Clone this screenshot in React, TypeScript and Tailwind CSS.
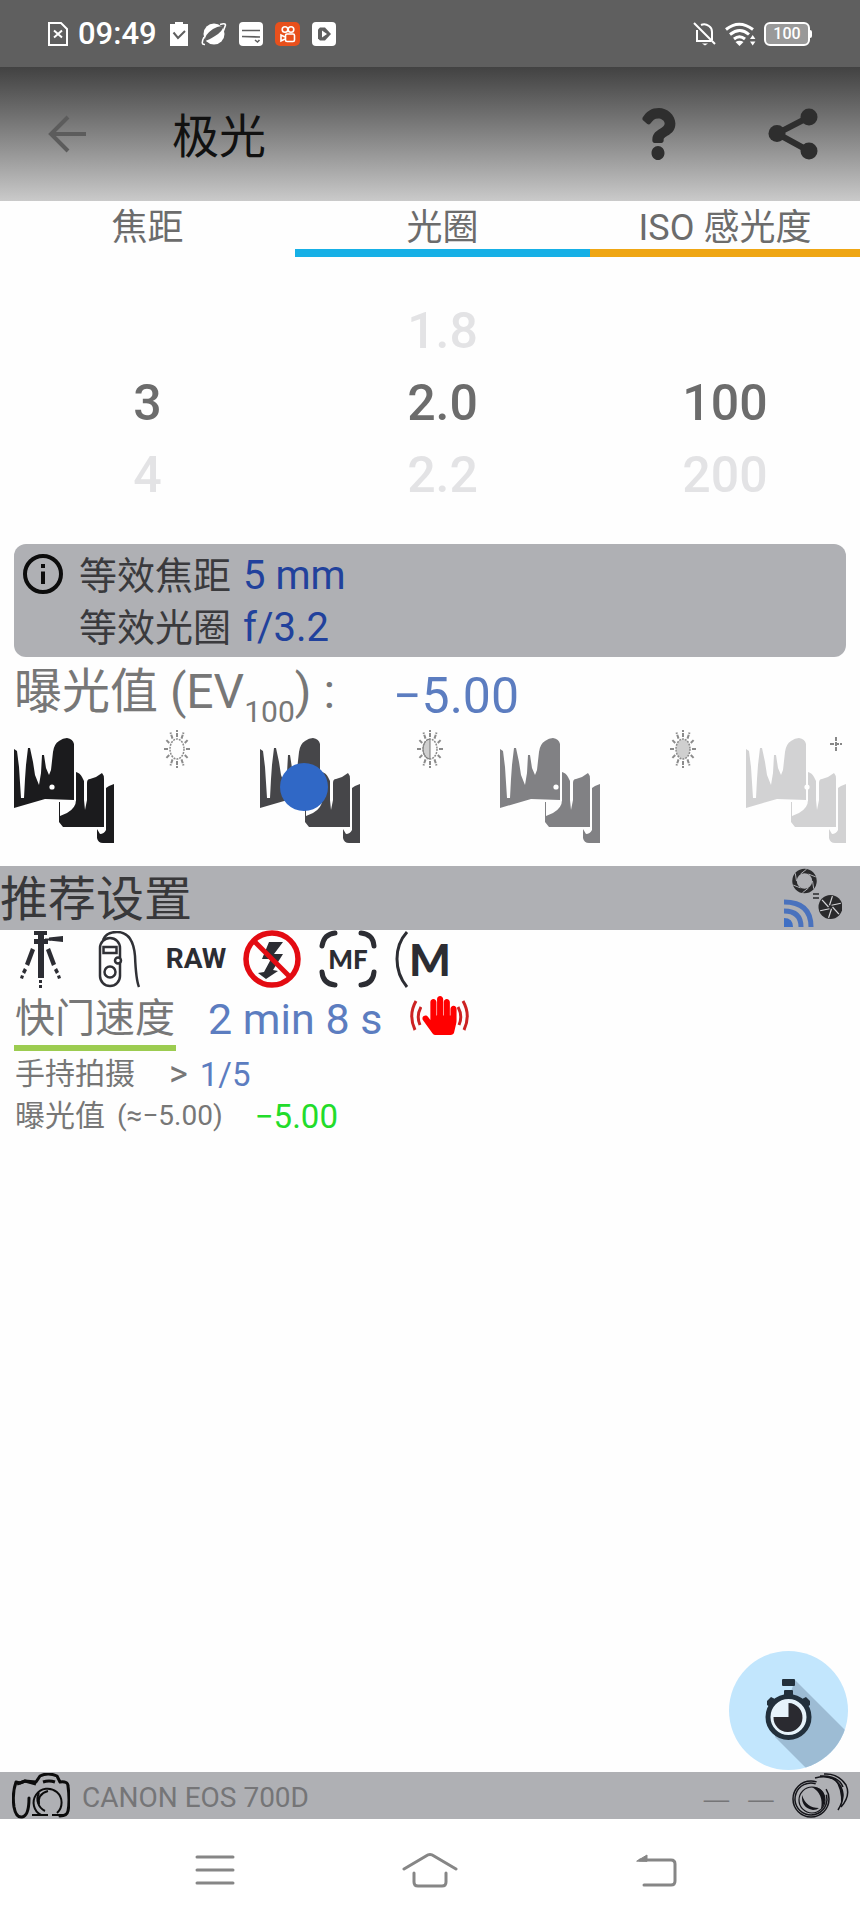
import type { ReactNode } from "react";
import { FaHandPaper, FaQuestion } from "react-icons/fa";

const pickers = [
  { label: "焦距", bar: "bg-transparent", rows: ["", "3", "4"] },
  { label: "光圈", bar: "bg-[#16b0e6]", rows: ["1.8", "2.0", "2.2"] },
  { label: "ISO 感光度", bar: "bg-[#efa614]", rows: ["", "100", "200"] },
];

const spokes = Array.from({ length: 12 }, (_, i) => (i * Math.PI) / 6);

function Ridge({ color, dot }: { color: string; dot: number }) {
  return (
    <svg width="100" height="106" viewBox="0 0 100 106" className={`shrink-0 ${color}`} fill="currentColor" aria-hidden="true">
      <path d="M0 12 3 14 5 30 7 61H10L11 42 12 28 14 11H16L19 25 21 38 25 48 27 36 28 18H30L32 31 35 38 37 33 39 15Q40 7 45 4 49 1 53 1 59 2 60 7V63L31 62 0 71Z" />
      <path d="M45 65h1v14l7-3q9-5 9-13V35q4 1 6 5l2 4v19l1 10 2-10V46q0-4 3-4l6-2 6-4q2 2 2 6v48H49l-4-5Z" />
      <path d="M100 47l-5 2-3 2v42q-2 4-6 4l-3-5V101q1 5 6 5H100Z" />
      <path d="M61.500 34V64" stroke="#fff" strokeWidth="1" />
      <circle cx={dot} cy="50" r="2.600" fill="#fff" />
    </svg>
  );
}

function Sun({ fill }: { fill: "none" | "half" | "full" }) {
  return (
    <svg width="28" height="40" viewBox="-14 -20 28 40" stroke="#8b8b8b" fill="none" aria-hidden="true">
      {fill === "full" && <ellipse rx="7" ry="10" fill="#cfcfcf" stroke="none" />}
      {fill === "half" && <path d="M0-10A7 10 0 0 0 0 10Z" fill="#cfcfcf" stroke="#777" />}
      <ellipse rx="7" ry="10" strokeWidth="1.500" strokeDasharray="2 1" />
      {spokes.map((a) => (
        <line
          key={a}
          x1={Math.cos(a) * 9}
          y1={Math.sin(a) * 12}
          x2={Math.cos(a) * 13}
          y2={Math.sin(a) * 19}
          strokeWidth="2"
          strokeDasharray="4 1"
        />
      ))}
    </svg>
  );
}

function StatusBar() {
  return (
    <div className="flex h-[67px] items-center justify-between bg-[#5f5f5f] pr-12 pl-12 text-white">
      <div className="flex items-center gap-3">
        <svg width="20" height="24" viewBox="0 0 20 24" fill="none" stroke="currentColor" strokeWidth="2">
          <path d="M1 1h12l6 6v16H1ZM6 8.500l8 7M14 8.500l-8 7" />
        </svg>
        <span className="-ml-0.5 text-[31px] leading-none font-medium">09:49</span>
        <svg width="20" height="24" viewBox="0 0 20 24">
          <path d="M1 2h5V0h8v2h5v22H1Z" fill="currentColor" />
          <path d="M4.500 10.500 9 16l7-7" fill="none" stroke="#5f5f5f" strokeWidth="2" />
        </svg>
        <svg width="26" height="24" viewBox="0 0 26 24">
          <circle cx="13" cy="12" r="10.500" fill="currentColor" />
          <path d="M4 22.500Q-1 23 3 15M19 2.500q7-2 5 2-1 4-4 8" fill="none" stroke="currentColor" strokeWidth="1.600" />
          <path d="M4 19Q3 13 12 7q7-4 10-2 0 4-8 9-6 4-10 5Z" fill="#5f5f5f" />
        </svg>
        <svg width="24" height="24" viewBox="0 0 24 24">
          <rect width="24" height="24" rx="4" fill="currentColor" />
          <path d="M3 8.500h18M3 14.500l18 .500M16 18l2.500 2 2-2" fill="none" stroke="#5f5f5f" strokeWidth="1.600" />
        </svg>
        <svg width="25" height="24" viewBox="0 0 25 24" fill="none" stroke="#fff" strokeWidth="1.600">
          <rect width="25" height="24" rx="5" fill="#e8501c" stroke="none" />
          <circle cx="10" cy="7.500" r="2.800" />
          <circle cx="16" cy="7.500" r="2.800" />
          <rect x="10.500" y="12" width="9" height="7.500" rx="1.500" />
          <path d="M10 15 6 13v6l4-2" />
        </svg>
        <svg width="24" height="24" viewBox="0 0 24 24">
          <rect width="24" height="24" rx="4" fill="currentColor" />
          <path d="M8 5.500h5l6 6.500-6 6.500H8l-2-2v-9Z" fill="#5f5f5f" />
          <path d="M10 8.500v7l5-3.500Z" fill="#fff" />
        </svg>
      </div>
      <div className="flex items-center gap-2">
        <svg width="24" height="24" viewBox="0 0 24 24" fill="none" stroke="currentColor" strokeWidth="2">
          <path d="M4 8v11h14M8 3q4-2 8 1 3 2 3 6v8M1 1l21 21" />
          <path d="M9 21.500h6l-3 2Z" fill="currentColor" stroke="none" />
        </svg>
        <svg width="31" height="24" viewBox="0 0 31 24" fill="none" stroke="currentColor" strokeWidth="3">
          <path d="M1 7.500Q14-3 28 7.500M5 12.500q10-8 19 0M9 17q5.500-4.500 11 0" />
          <path d="m10.500 20 4 4 4-4q-4-2.500-8 0ZM25 17l2.700-4 2.700 4ZM25 19.500l2.700 4 2.700-4Z" fill="currentColor" stroke="none" />
        </svg>
        <div className="flex items-center">
          <div className="flex h-6 w-[46px] items-center justify-center rounded-md border-2 border-white bg-[#999] text-base leading-none font-medium">
            100
          </div>
          <div className="h-2 w-0.5 rounded-r bg-white" />
        </div>
      </div>
    </div>
  );
}

function TopBar() {
  return (
    <header className="flex h-[134px] items-center bg-linear-to-b from-[#424242] to-[#cacaca] pr-[42px] pl-12">
      <button aria-label="返回" className="text-[#5c5c5c]">
        <svg width="39" height="38" viewBox="0 0 39 38" fill="none" stroke="currentColor" strokeWidth="4">
          <path d="M38 19H3M20 2 3 19l17 17" />
        </svg>
      </button>
      <h1 className="ml-[85px] flex-1 pt-1 text-[47px] leading-none text-[#111]">极光</h1>
      <button aria-label="帮助" className="text-[#2e2e2e]">
        <FaQuestion className="h-[52px] w-9" preserveAspectRatio="none" />
      </button>
      <button aria-label="分享" className="ml-[92px] text-[#2e2e2e]">
        <svg width="50" height="52" viewBox="0 0 50 52" fill="currentColor">
          <path d="M41 9 9 25.500 41 43" fill="none" stroke="currentColor" strokeWidth="6" />
          <circle cx="41" cy="9" r="8.500" />
          <circle cx="9" cy="25.500" r="8.500" />
          <circle cx="41" cy="43" r="8.500" />
        </svg>
      </button>
    </header>
  );
}

function Pickers() {
  return (
    <section className="grid h-[343px] grid-cols-[295fr_295fr_270fr] text-center text-[#6c6c6c]">
      {pickers.map((picker) => (
        <div key={picker.label}>
          <h2 className="h-12 pt-1 text-[36px] leading-[46px]">{picker.label}</h2>
          <div className={`h-2 ${picker.bar}`} />
          <ul className="pt-[38px] text-[50px] leading-[72px] font-medium">
            {picker.rows.map((row, i) => (
              <li key={i} className={i === 1 ? "h-[72px]" : "h-[72px] text-[#e3e3e5]"}>
                {row}
              </li>
            ))}
          </ul>
        </div>
      ))}
    </section>
  );
}

function InfoBox() {
  return (
    <section className="mx-3.5 flex h-[113px] rounded-xl bg-[#afb0b4] pt-1.5 pl-[9px]">
      <svg width="40" height="40" viewBox="0 0 40 40" className="mt-1" aria-hidden="true">
        <circle cx="20" cy="20" r="18" fill="none" stroke="#0c0c0c" strokeWidth="4" />
        <path d="M18 10h4v4h-4ZM18 17.500h4V30h-4Z" fill="#0c0c0c" />
      </svg>
      <dl className="grid grid-cols-[auto_1fr] content-start gap-x-3 pl-4 text-[38px] leading-[52px] text-[#3a3a3d]">
        <dt>等效焦距</dt>
        <dd className="text-[40px] text-[#21419c]">5 mm</dd>
        <dt>等效光圈</dt>
        <dd className="text-[40px] text-[#21419c]">f/3.2</dd>
      </dl>
    </section>
  );
}

function Exposure() {
  return (
    <section className="mx-3.5">
      <div className="flex h-[72px] items-start text-[#777]">
        <label htmlFor="ev" className="w-[379px] text-[48px] leading-[70px]">
          曝光值 (EV
          <span className="relative top-3.5 text-[30px] leading-none">100</span>) :
        </label>
        <output htmlFor="ev" className="text-[50px] leading-[78px] text-[#5c7dc0]">
          −5.00
        </output>
      </div>
      <div className="relative grid grid-cols-[246fr_240fr_246fr_100fr]">
        <div className="flex">
          <Ridge color="mt-2 text-[#1b1b1d]" dot={38} />
          <div className="flex flex-1 justify-center pr-5">
            <Sun fill="none" />
          </div>
        </div>
        <div className="flex">
          <Ridge color="mt-2 text-[#464649]" dot={50} />
          <div className="flex flex-1 justify-center">
            <Sun fill="half" />
          </div>
        </div>
        <div className="flex">
          <Ridge color="mt-2 text-[#818184]" dot={56} />
          <div className="flex flex-1 justify-center pl-5">
            <Sun fill="full" />
          </div>
        </div>
        <div className="flex">
          <Ridge color="mt-2 text-[#d2d2d3]" dot={61} />
          <svg width="12" height="14" viewBox="0 0 12 14" className="-ml-4 mt-2 shrink-0" stroke="#888" strokeWidth="2" strokeDasharray="4 1">
            <path d="M6 0v14M0 7h12" />
          </svg>
        </div>
        <input
          id="ev"
          type="range"
          min="-10"
          max="4.75"
          step="0.25"
          defaultValue="-5"
          className="absolute inset-x-0 top-[34px] h-12 w-full appearance-none bg-transparent [&::-webkit-slider-thumb]:size-12 [&::-webkit-slider-thumb]:appearance-none [&::-webkit-slider-thumb]:rounded-full [&::-webkit-slider-thumb]:bg-[#3068c6]"
        />
      </div>
    </section>
  );
}

function ApertureMatch() {
  return (
    <svg width="58" height="60" viewBox="0 0 58 60" fill="none" aria-hidden="true">
      <circle cx="20.500" cy="13" r="10" stroke="#2a2a2c" strokeWidth="4.500" />
      <g stroke="#afb0b4" strokeWidth="1">
        {spokes.filter((_, i) => i % 2 === 0).map((a) => (
          <path key={a} d={`M${20.5 + 8 * Math.cos(a)} ${13 + 8 * Math.sin(a)}L${20.5 + 12 * Math.cos(a + 0.7)} ${13 + 12 * Math.sin(a + 0.7)}`} />
        ))}
      </g>
      <path d="M29 26h6M29 30h6" stroke="#2a2a2c" strokeWidth="1.500" />
      <circle cx="46.500" cy="39" r="12" fill="#2a2a2c" />
      <g stroke="#d5d5d8" strokeWidth="1.200">
        {spokes.filter((_, i) => i % 2 === 0).map((a) => (
          <path key={a} d={`M${46.5 + 2 * Math.cos(a)} ${39 + 2 * Math.sin(a)}L${46.5 + 11 * Math.cos(a + 0.7)} ${39 + 11 * Math.sin(a + 0.7)}`} />
        ))}
      </g>
      <path d="M0 59V50q9 0 9 9Z" fill="#3f6fc4" />
      <path d="M0 43q17 0 17 16M0 34q27 0 27 25" stroke="#4a72bd" strokeWidth="5" />
    </svg>
  );
}

function Tripod() {
  return (
    <svg width="58" height="57" viewBox="0 0 58 57" fill="#2c2d33" aria-label="三脚架">
      <path d="M19 0h13v4h-3v4h4v5h-4v34h-6V13h-4V8h4V4h-4ZM34 6.500l14-1.500v6L34 9.500Z" />
      <path d="M30 8.500h6" stroke="#2c2d33" strokeWidth="2" />
      <path d="M16 17l4 2-6 16-4-2ZM35 17l-4 2 6 16 4-2Z" />
      <path d="M24 49h3v3h-3ZM24 54h3v3h-3ZM9 37l3 2-2 4-3-2ZM42 37l-3 2 2 4 3-2ZM6 44l3 1-1 3-3-1ZM45 44l-3 1 1 3 3-1Z" />
    </svg>
  );
}

function RemoteRelease() {
  return (
    <svg width="58" height="57" viewBox="0 0 58 57" fill="none" stroke="#303136" strokeWidth="2.500" aria-label="快门线">
      <rect x="9" y="7" width="20" height="48" rx="10" />
      <rect x="12.500" y="16" width="13" height="6" />
      <circle cx="19" cy="41" r="5.500" />
      <circle cx="27" cy="29.500" r="3" fill="#fff" />
      <path d="M12 9Q15 1 26 1q16 0 18 24 1 24 4 31" />
    </svg>
  );
}

function NoFlash() {
  return (
    <svg width="58" height="58" viewBox="0 0 58 58" aria-label="关闭闪光灯">
      <path d="M26 12h14l-9 12h9L30 40l5 1-12 8-8-6 6-1 7-13H19Z" fill="#2c2d33" />
      <circle cx="29" cy="29" r="26" fill="none" stroke="#e30b12" strokeWidth="5.500" />
      <path d="M11 11 47 47" stroke="#e30b12" strokeWidth="5" />
    </svg>
  );
}

function ManualFocus({ children }: { children: ReactNode }) {
  return (
    <div className="relative flex size-[58px] items-center justify-center font-['Lato'] text-[26px] leading-none font-black text-[#2c2d33]">
      <svg viewBox="0 0 58 58" className="absolute inset-0" fill="none" stroke="#2c2d33" strokeWidth="5" strokeLinecap="round" aria-hidden="true">
        <path d="M3 16Q5 4 16 3M42 3q12 1 13 13M55 42q-1 12-13 13M16 55Q4 54 3 42" />
      </svg>
      {children}
    </div>
  );
}

function Recommended() {
  return (
    <section>
      <div className="mt-[23px] flex h-16 items-center justify-between bg-[#afb0b4] pr-[18px]">
        <h2 className="pt-1 text-[48px] leading-none text-[#38383a]">推荐设置</h2>
        <ApertureMatch />
      </div>
      <div className="flex h-[58px] items-center gap-[18px] pl-[15px]">
        <Tripod />
        <RemoteRelease />
        <span className="flex w-[58px] justify-center text-[28px] leading-none font-bold text-[#2c2d33]">RAW</span>
        <NoFlash />
        <ManualFocus>MF</ManualFocus>
        <div className="flex items-center text-[#2c2d33]">
          <svg width="14" height="57" viewBox="0 0 14 57" fill="none" stroke="currentColor" strokeWidth="3" aria-hidden="true">
            <path d="M12 1Q2 12 2 28t10 28" />
          </svg>
          <span className="font-['Lato'] text-[44px] leading-none font-black">M</span>
        </div>
      </div>
      <div className="flex h-[64px] items-start px-3.5">
        <h3 className="h-[63px] border-b-[6px] border-[#9ccc50] px-px text-[40px] leading-[62px] text-[#777]">快门速度</h3>
        <span className="ml-8 text-[43px] leading-[62px] text-[#5c7dc0]">2 min 8 s</span>
        <span className="mt-2 ml-7 flex items-center text-[#f00]">
          <svg width="12" height="36" viewBox="0 0 12 36" fill="none" stroke="#c22" strokeWidth="3">
            <path d="M6 3Q-2 17 5 32M11 9Q6 18 10 27" />
          </svg>
          <FaHandPaper className="-mx-0.5 size-[39px]" />
          <svg width="12" height="36" viewBox="0 0 12 36" fill="none" stroke="#c22" strokeWidth="3">
            <path d="M6 3q8 14 1 29M1 9q5 9 1 18" />
          </svg>
        </span>
      </div>
      <div className="flex h-11 items-center pl-[15px] text-[30px] leading-none text-[#777]">
        <span>手持拍摄</span>
        <span className="ml-[34px] text-[36px]">&gt;</span>
        <span className="ml-3 text-[33px] text-[#5c7dc0]">1/5</span>
      </div>
      <div className="flex h-10 items-center pl-[15px] text-[30px] leading-none text-[#777]">
        <span>曝光值</span>
        <span className="ml-3 text-[28px]">(≈−5.00)</span>
        <span className="ml-8 text-[33px] text-[#22dc2a]">−5.00</span>
      </div>
    </section>
  );
}

function TimerButton() {
  return (
    <button aria-label="计时器" className="absolute right-3 bottom-0.5 size-[119px] overflow-hidden rounded-full bg-[#c2e6fd]">
      <svg viewBox="0 0 119 119" className="size-full">
        <path d="M66 29 119 82V119H79L46 86Z" fill="#9dbcd4" />
        <g fill="#22303c">
          <rect x="53" y="28" width="13" height="7" rx="1" />
          <rect x="55" y="39" width="9" height="7" rx="1" />
          <path d="m38 50 4-4 6 3-7 7-3-2ZM81 50l-4-4-6 3 7 7 3-2Z" />
        </g>
        <circle cx="59.500" cy="66" r="20.500" fill="#e6f3fb" stroke="#22303c" strokeWidth="5" />
        <path d="M59.500 66V52a14.500 14.500 0 1 1-15 14Z" fill="#2a2a30" />
      </svg>
    </button>
  );
}

function GearBar() {
  return (
    <div className="flex h-[47px] items-center bg-[#afb0b4] pr-2.5 pl-3 text-[28px] leading-none text-[#757577]">
      <svg width="58" height="46" viewBox="0 0 58 46" fill="none" stroke="#0c0c0c" aria-hidden="true">
        <path d="M17 25q0 18-7 19-6 1-8-10Q0 20 4 9l4 1 5-2 11 1 4-6q8-4 17 0l3 6q8-1 8 4 2 15 0 25-1 5-8 5" strokeWidth="3" strokeLinecap="round" strokeLinejoin="round" />
        <path d="M5 11l8-3 11 3M31 9q6-2 12 0" strokeWidth="3" />
        <path d="M29 42A14 14 0 1 1 45 40" strokeWidth="2" />
        <path d="M33 38A13 13 0 0 1 27 20M27 32q-2-11 9-14M20 42h16M40 42h14" strokeWidth="2" />
      </svg>
      <span className="ml-3 flex-1 pt-1">CANON EOS 700D</span>
      <span className="flex gap-4 font-['Noto_Sans_CJK_SC'] text-[32px] font-light">
        <span>—</span>
        <span>—</span>
      </span>
      <svg width="58" height="46" viewBox="0 0 58 46" className="ml-[17px]" fill="none" stroke="#15151a" aria-hidden="true">
        <ellipse cx="19" cy="26" rx="18" ry="18" strokeWidth="1.500" strokeDasharray="90 12" />
        <ellipse cx="19" cy="26" rx="16" ry="16" strokeWidth="1.500" strokeDasharray="74 16" transform="rotate(20 19 26)" />
        <ellipse cx="20" cy="27" rx="13" ry="13" strokeWidth="1.200" />
        <path d="M20 14q13 0 13 13-1 6-4 9 3-15-9-22Z" fill="#15151a" stroke="none" />
        <path d="M10 22q-1 13 11 15 4 0 6-2Q14 35 10 22Z" fill="#15151a" stroke="none" />
        <path d="M23 5Q41 0 49 14q5 10-3 23M32 1q14-1 22 11 5 11-5 22M28 3q18-1 23 11" strokeWidth="1.500" />
        <path d="M42 6q14 10 7 26 1-17-7-26Z" fill="#15151a" stroke="none" />
      </svg>
    </div>
  );
}

function NavBar() {
  return (
    <nav className="flex h-[101px] items-start bg-white px-[108px] pt-[31px] text-[#868686]">
      <div className="grid flex-1 grid-cols-3">
        <button aria-label="最近任务" className="flex h-10 items-center justify-center">
          <svg width="40" height="32" viewBox="0 0 40 32" stroke="currentColor" strokeWidth="3" strokeLinecap="round">
            <path d="M2 3h36M2 16h36M2 29h36" />
          </svg>
        </button>
        <button aria-label="主页" className="flex h-10 items-center justify-center">
          <svg width="56" height="36" viewBox="0 0 56 36" fill="none" stroke="currentColor" strokeWidth="3" strokeLinecap="round">
            <path d="M2 17 24 4q4-3 8 0l22 13M12 21v9q0 4 4 4h24q4 0 4-4v-9" />
          </svg>
        </button>
        <button aria-label="返回上一页" className="flex h-10 items-center justify-center pl-6">
          <svg width="42" height="34" viewBox="0 0 42 34" fill="none" stroke="currentColor" strokeWidth="3" strokeLinecap="round">
            <path d="M4 7h31q4 0 4 4v17q0 4-4 4H8" />
            <path d="M1 8 11 2v6Z" fill="currentColor" strokeWidth="1" />
          </svg>
        </button>
      </div>
    </nav>
  );
}

export default function App() {
  return (
    <div className="flex min-h-screen flex-col bg-[#fefefe] font-['Roboto','Noto_Sans_CJK_SC',sans-serif]">
      <StatusBar />
      <TopBar />
      <main className="relative flex-1">
        <Pickers />
        <InfoBox />
        <Exposure />
        <Recommended />
        <TimerButton />
      </main>
      <GearBar />
      <NavBar />
    </div>
  );
}
